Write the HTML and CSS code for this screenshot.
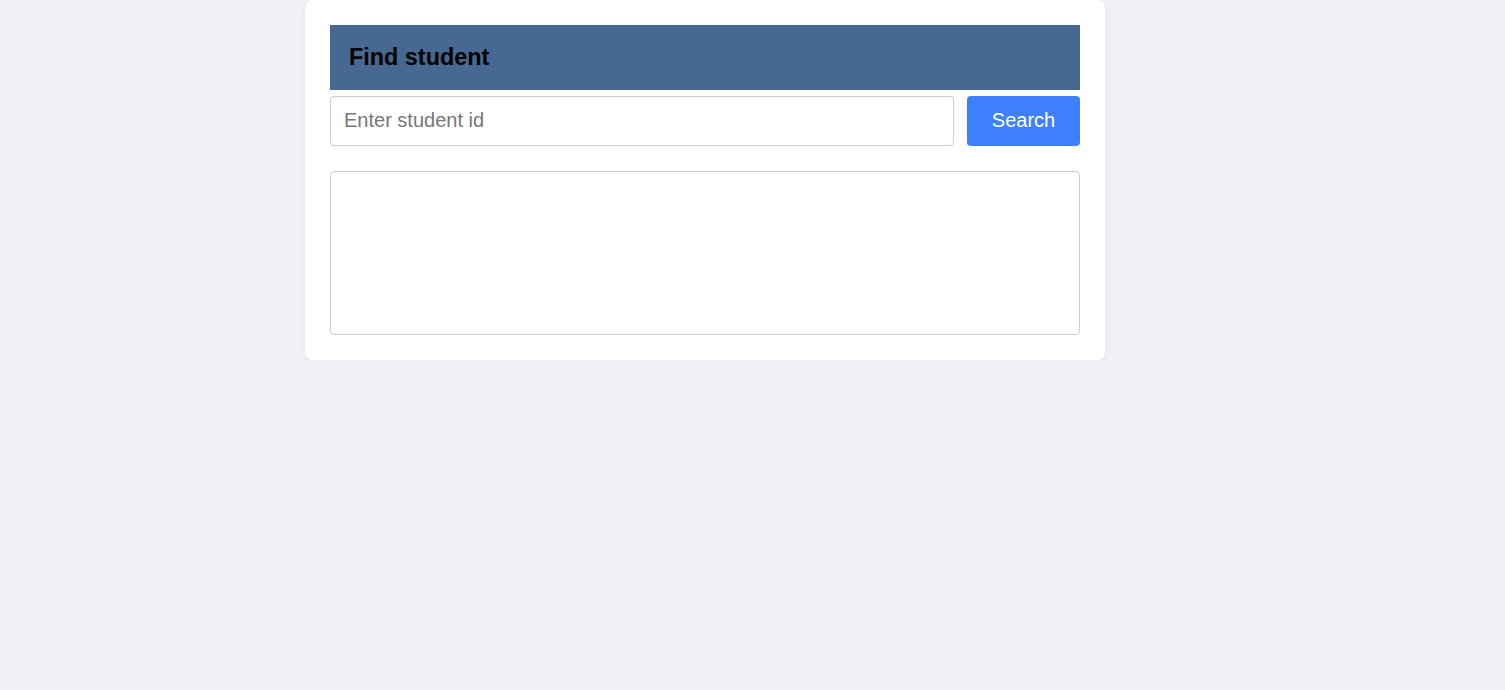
FILE: index.html
```html
<!DOCTYPE html>
<html>
<head>
<meta charset="utf-8">
<link rel="stylesheet" href="styles.css">
</head>
<body>
<div class="page">
  <div class="card">
    <div class="card-header"><h2 class="title">Find student</h2></div>
    <div class="search-row">
      <input class="search-input" type="text" placeholder="Enter student id">
      <button class="search-btn">Search</button>
    </div>
    <div class="result"></div>
  </div>
</div>
</body>
</html>
```
FILE: styles.css
```css
html, body {
  margin: 0;
  padding: 0;
  background: #f0f1f5;
  font-family: "Liberation Sans", Arial, sans-serif;
}
.page {
  padding-left: 305px;
}
.card {
  width: 800px;
  box-sizing: border-box;
  background: #fff;
  border-radius: 8px;
  padding: 25px;
  box-shadow: 0 2px 6px rgba(0,0,0,0.06);
}
.card-header {
  background: #476891;
  height: 65px;
  display: flex;
  align-items: center;
  padding-left: 19px;
}
.title {
  margin: 0;
  font-size: 23.4px;
  font-weight: bold;
  color: #000;
}
.search-row {
  display: flex;
  gap: 13px;
  margin-top: 6px;
}
.search-input {
  flex: 1;
  height: 50px;
  box-sizing: border-box;
  border: 1px solid #cccccc;
  border-radius: 4px;
  padding: 0 13px 2px;
  font-size: 20px;
  font-family: inherit;
  color: #333;
  outline: none;
}
.search-input::placeholder {
  color: #777;
}
.search-btn {
  width: 113px;
  height: 50px;
  border: none;
  border-radius: 4px;
  background: #3e80fb;
  color: #fff;
  font-size: 20px;
  font-family: inherit;
  padding: 0 0 2px;
  cursor: pointer;
}
.result {
  margin-top: 25px;
  height: 164px;
  box-sizing: border-box;
  border: 1px solid #cccccc;
  border-radius: 4px;
}
```
